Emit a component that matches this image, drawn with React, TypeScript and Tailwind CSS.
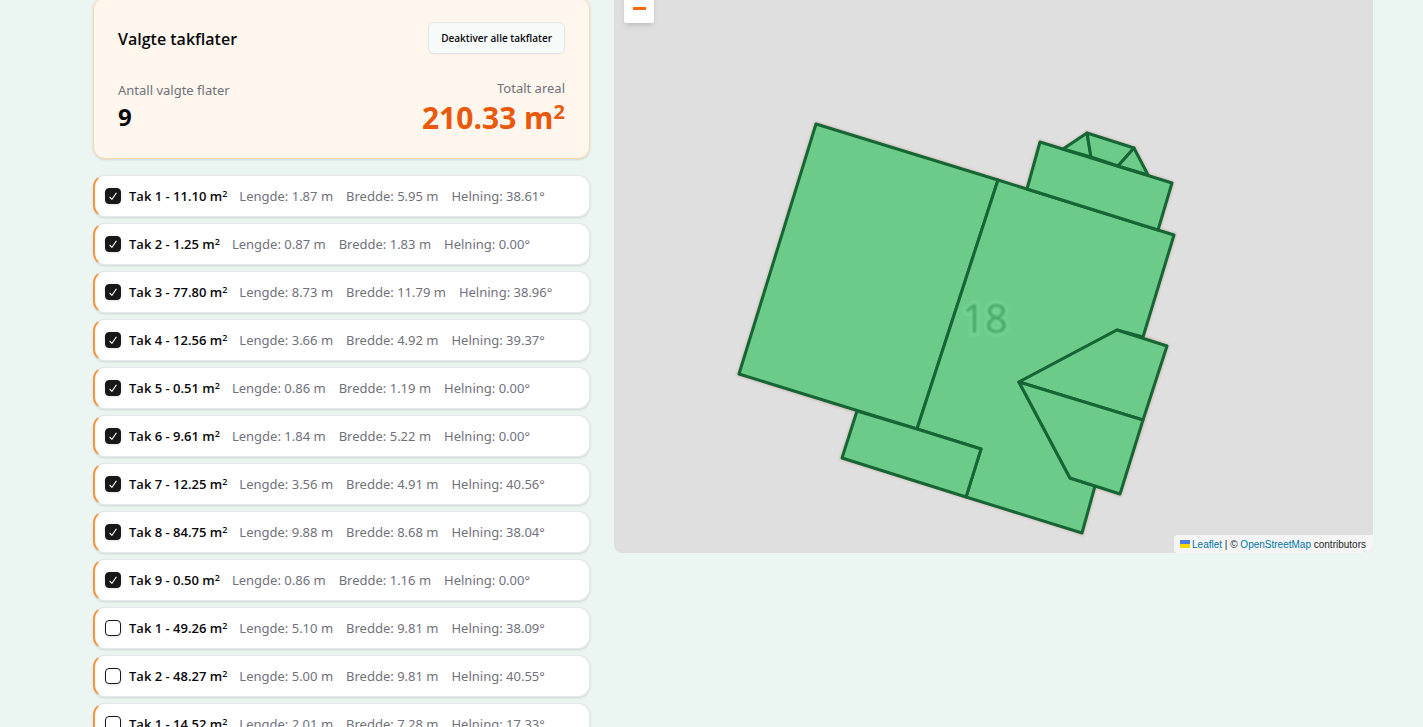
import { useState } from "react";

interface Roof {
  id: number;
  name: string;
  area: string;
  length: string;
  width: string;
  slope: string;
  selected: boolean;
}

const initialRoofs: Roof[] = [
  { id: 1, name: "Tak 1", area: "11.10", length: "1.87", width: "5.95", slope: "38.61", selected: true },
  { id: 2, name: "Tak 2", area: "1.25", length: "0.87", width: "1.83", slope: "0.00", selected: true },
  { id: 3, name: "Tak 3", area: "77.80", length: "8.73", width: "11.79", slope: "38.96", selected: true },
  { id: 4, name: "Tak 4", area: "12.56", length: "3.66", width: "4.92", slope: "39.37", selected: true },
  { id: 5, name: "Tak 5", area: "0.51", length: "0.86", width: "1.19", slope: "0.00", selected: true },
  { id: 6, name: "Tak 6", area: "9.61", length: "1.84", width: "5.22", slope: "0.00", selected: true },
  { id: 7, name: "Tak 7", area: "12.25", length: "3.56", width: "4.91", slope: "40.56", selected: true },
  { id: 8, name: "Tak 8", area: "84.75", length: "9.88", width: "8.68", slope: "38.04", selected: true },
  { id: 9, name: "Tak 9", area: "0.50", length: "0.86", width: "1.16", slope: "0.00", selected: true },
  { id: 10, name: "Tak 1", area: "49.26", length: "5.10", width: "9.81", slope: "38.09", selected: false },
  { id: 11, name: "Tak 2", area: "48.27", length: "5.00", width: "9.81", slope: "40.55", selected: false },
  { id: 12, name: "Tak 1", area: "14.52", length: "2.01", width: "7.28", slope: "17.33", selected: false },
];

const outline =
  "202,124 413,189 426,142 450,149 473,133 520,148 534,175 558,183 544,230 560,235 529,337 553,346 506,494 481,486 468,533 228,458 243,411 125,374";

const surfaces = [
  "202,124 384,180 303,429 125,374",
  "384,180 560,235 529,337 503,330 405,382 456,478 481,486 468,533 352,497 367,449 303,429",
  "426,142 558,183 544,230 413,189",
  "449,149 473,133 477,157",
  "473,133 520,148 504,166 477,157",
  "520,148 534,175 504,166",
  "503,330 553,346 529,420 405,382",
  "529,420 506,494 456,478 405,382",
  "243,411 303,429 367,449 352,497 228,458",
];

interface RoofRowProps {
  roof: Roof;
  onToggle: (id: number) => void;
}

function RoofRow({ roof, onToggle }: RoofRowProps) {
  return (
    <li className="flex h-[42px] items-center gap-3 rounded-xl border border-l-2 border-gray-200 border-l-[#fb923c] bg-white pl-2.5 pr-3 text-[13px] whitespace-nowrap shadow-sm">
      <label className="flex items-center gap-2 font-semibold text-zinc-950">
        <span className="relative flex size-4">
          <input
            type="checkbox"
            checked={roof.selected}
            onChange={() => onToggle(roof.id)}
            className="peer size-4 appearance-none rounded-sm border border-zinc-900 bg-white shadow-sm checked:bg-zinc-900"
          />
          <svg
            viewBox="0 0 16 16"
            className="pointer-events-none absolute inset-0 hidden peer-checked:block"
            fill="none"
            stroke="white"
            strokeWidth="1.1"
          >
            <path d="M4.6 8.9l2.3 2.4 4.6-6.5" />
          </svg>
        </span>
        <span className="pt-0.5">
          {roof.name} - {roof.area} m<sup className="text-[9px]">2</sup>
        </span>
      </label>
      <div className="flex gap-[13px] pt-0.5 font-['Noto_Sans',sans-serif] text-zinc-500">
        <span>Lengde: {roof.length} m</span>
        <span>Bredde: {roof.width} m</span>
        <span>Helning: {roof.slope}°</span>
      </div>
    </li>
  );
}

function RoofMap() {
  return (
    <section className="relative h-[553px] overflow-hidden rounded-b-lg bg-[#dfdfdf]">
      <svg viewBox="0 0 759 553" className="size-full">
        <defs>
          <filter id="soft" x="-20%" y="-20%" width="140%" height="140%">
            <feGaussianBlur stdDeviation="1" />
          </filter>
        </defs>
        <polygon points={outline} fill="none" stroke="#d3c3bc" strokeWidth="5" filter="url(#soft)" />
        <g fill="#6ccb88" stroke="#166534" strokeWidth="3" strokeLinejoin="round">
          {surfaces.map((points) => (
            <polygon key={points} points={points} />
          ))}
        </g>
        <g className="font-['Noto_Sans',sans-serif] text-[40px]" textAnchor="middle">
          <text x="371" y="333" fill="none" stroke="#74d492" strokeWidth="6" filter="url(#soft)">
            18
          </text>
          <text x="371" y="333" fill="#47a869" filter="url(#soft)">
            18
          </text>
        </g>
      </svg>
      <button
        type="button"
        aria-label="Zoom ut"
        className="absolute -top-[7px] left-2.5 flex size-[30px] items-center justify-center rounded-b-xs bg-white shadow-md"
      >
        <span className="h-[3px] w-[13px] bg-[#ff6900]" />
      </button>
      <footer className="absolute right-0 bottom-0 flex h-[18px] items-center gap-0.5 rounded-l-sm bg-[#f5f5f5] pr-[7px] pl-1.5 font-['Liberation_Sans',Arial,sans-serif] text-[10px] whitespace-pre text-zinc-800">
        <svg viewBox="0 0 10 8" className="h-2 w-2.5">
          <path fill="#4c7be1" d="M0 0h10v4H0z" />
          <path fill="#ffd500" d="M0 4h10v4H0z" />
        </svg>
        <span>
          <a href="#leaflet" className="text-[#0078a8]">Leaflet</a> | ©{" "}
          <a href="#openstreetmap" className="text-[#0078a8]">OpenStreetMap</a> contributors
        </span>
      </footer>
    </section>
  );
}

export default function App() {
  const [roofs, setRoofs] = useState(initialRoofs);

  const selected = roofs.filter((roof) => roof.selected);
  const total = selected.reduce((sum, roof) => sum + Number(roof.area), 0);

  function handleToggle(id: number) {
    setRoofs(roofs.map((roof) => (roof.id === id ? { ...roof, selected: !roof.selected } : roof)));
  }

  function handleDeactivateAll() {
    setRoofs(roofs.map((roof) => ({ ...roof, selected: false })));
  }

  return (
    <main className="h-screen overflow-hidden bg-[#ebf5f2] pr-[50px] pl-[93px] font-['Open_Sans','Noto_Sans',sans-serif] text-zinc-950">
      <div className="grid grid-cols-[497fr_759fr] items-start gap-6">
        <div className="-mt-[3px] flex flex-col gap-4">
          <section className="flex flex-col gap-6 rounded-xl border border-[#fed7aa] bg-[#fff7ed] p-6 shadow-sm">
            <div className="flex items-center justify-between">
              <h2 className="pt-0.5 text-base font-semibold">Valgte takflater</h2>
              <button
                type="button"
                onClick={handleDeactivateAll}
                className="h-8 rounded-md border border-gray-200 bg-[#f6faf9] px-3 text-[10px] font-semibold shadow-xs"
              >
                Deaktiver alle takflater
              </button>
            </div>
            <div className="flex h-14 items-center justify-between">
              <div>
                <p className="font-['Noto_Sans',sans-serif] text-[13px] leading-5 text-zinc-500">Antall valgte flater</p>
                <p className="pt-0.5 text-2xl leading-[30px] font-bold">{selected.length}</p>
              </div>
              <div className="text-right">
                <p className="font-['Noto_Sans',sans-serif] text-[13px] leading-5 text-zinc-500">Totalt areal</p>
                <p className="pt-1 text-3xl leading-8 font-bold text-[#ea580c]">
                  {total.toFixed(2)} m<sup className="text-xl leading-0">2</sup>
                </p>
              </div>
            </div>
          </section>
          <ul className="flex flex-col gap-1.5">
            {roofs.map((roof) => (
              <RoofRow key={roof.id} roof={roof} onToggle={handleToggle} />
            ))}
          </ul>
        </div>
        <RoofMap />
      </div>
    </main>
  );
}
